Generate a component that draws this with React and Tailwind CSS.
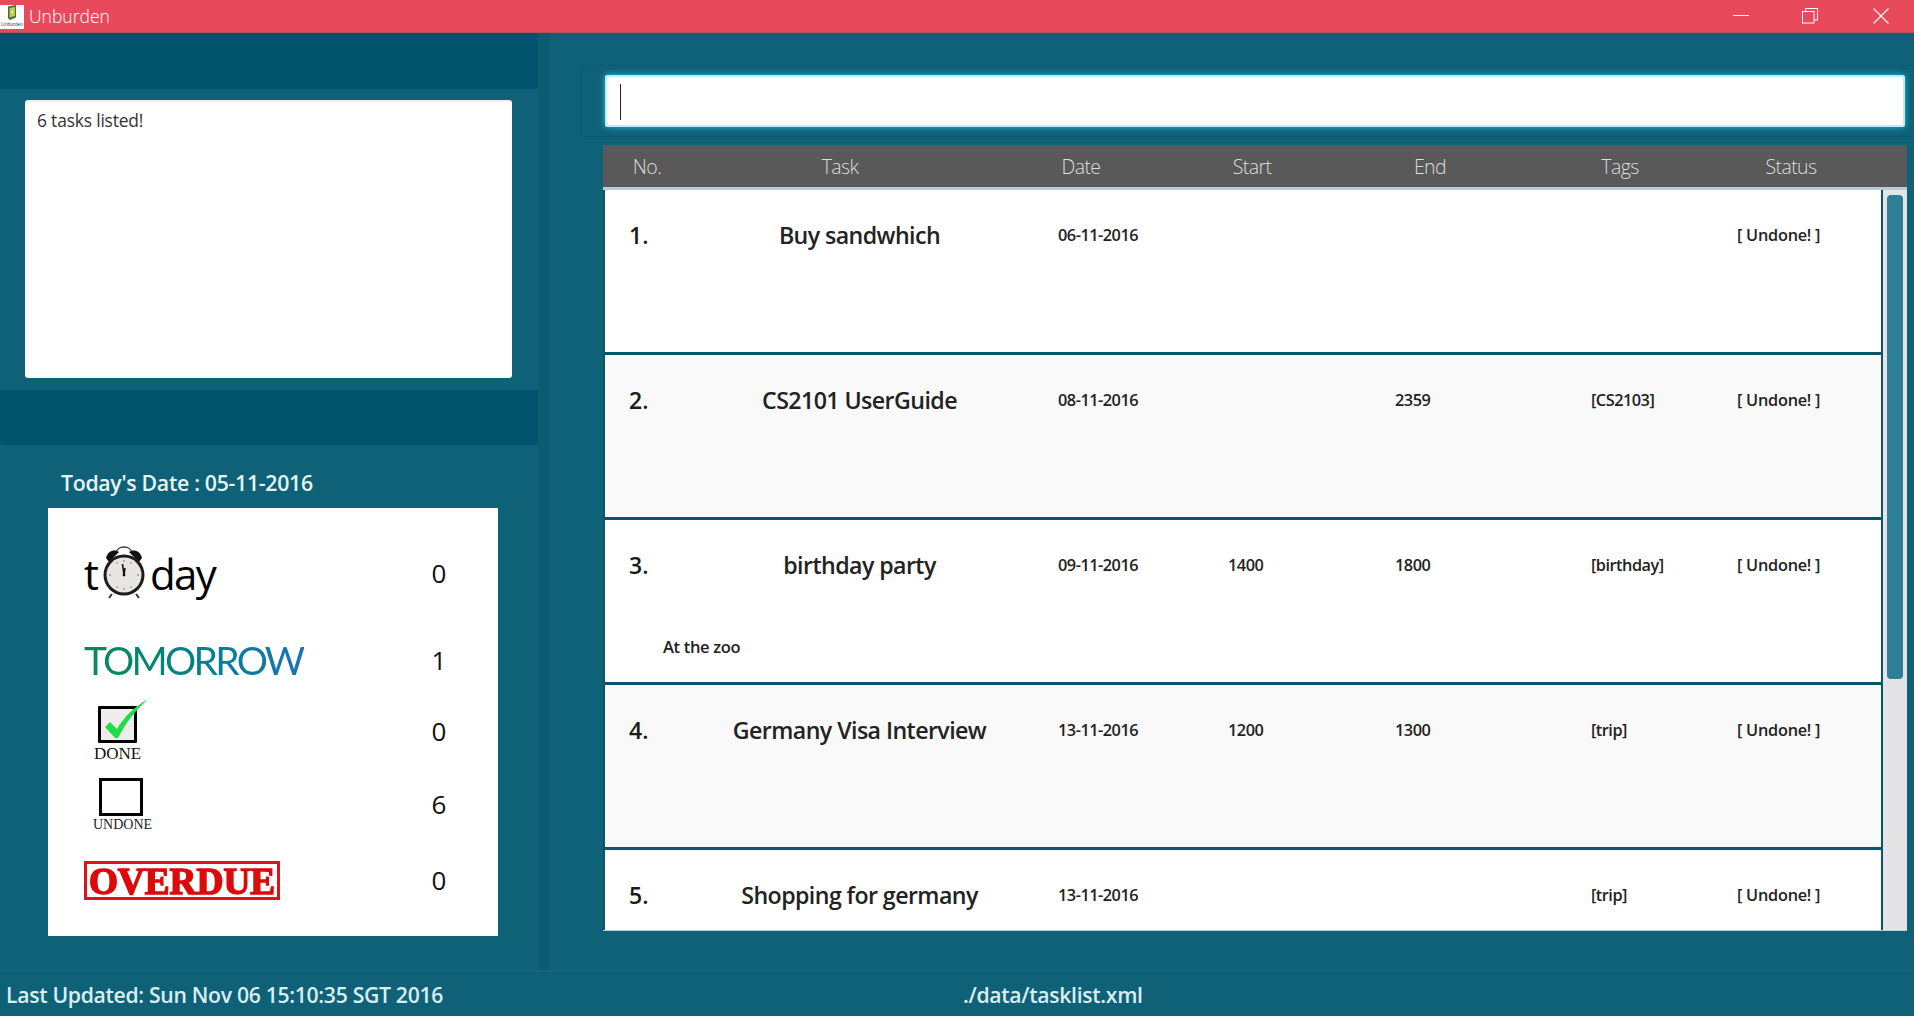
import React from 'react';

const tasks = [
    { no: '1.', name: 'Buy sandwhich', date: '06-11-2016', start: '', end: '', tags: '', desc: '' },
    { no: '2.', name: 'CS2101 UserGuide', date: '08-11-2016', start: '', end: '2359', tags: '[CS2103]', desc: '' },
    { no: '3.', name: 'birthday party', date: '09-11-2016', start: '1400', end: '1800', tags: '[birthday]', desc: 'At the zoo' },
    { no: '4.', name: 'Germany Visa Interview', date: '13-11-2016', start: '1200', end: '1300', tags: '[trip]', desc: '' },
    { no: '5.', name: 'Shopping for germany', date: '13-11-2016', start: '', end: '', tags: '[trip]', desc: '' },
];

const WindowControls = () => (
    <div className="flex items-center h-full text-white">
        <svg width="16" height="16" viewBox="0 0 16 16" className="mr-[53px]" fill="none" stroke="currentColor" strokeWidth="1">
            <path d="M0 7.5H16" />
        </svg>
        <svg width="16" height="16" viewBox="0 0 16 16" className="mr-[55px]" fill="none" stroke="currentColor" strokeWidth="1">
            <rect x="0.5" y="3.5" width="11.5" height="11.5" />
            <path d="M3.5 3.5V0.5H15.5V12H12" />
        </svg>
        <svg width="16" height="16" viewBox="0 0 16 16" className="mr-[25px]" fill="none" stroke="currentColor" strokeWidth="1.1">
            <path d="M0.5 0.5L15.5 15.5M15.5 0.5L0.5 15.5" />
        </svg>
    </div>
);

const TitleBar = () => (
    <div className="h-[33px] shrink-0 bg-[#e84a5c] flex items-center justify-between border-b border-[#b9505f]">
        <div className="flex items-center h-full">
            <div className="w-[24px] h-[24px] mt-[2px] bg-white flex flex-col items-center overflow-hidden">
                <svg width="10" height="16" viewBox="0 0 10 16" className="shrink-0">
                    <path d="M1 1.5L9 0V12.5L3 15L1 13Z" fill="#4d6b3a" />
                    <path d="M2.5 3L8 2V11L2.5 12.5Z" fill="#bcd04a" />
                    <circle cx="5.2" cy="7" r="1.2" fill="#eef3a0" />
                </svg>
                <span className="text-[5px] leading-[7px] text-[#444] font-['Liberation_Sans',sans-serif]">Unburden</span>
            </div>
            <span className="ml-[5px] text-[17.5px] font-light text-white font-['Open_Sans',sans-serif]">Unburden</span>
        </div>
        <WindowControls />
    </div>
);

const AlarmClock = () => (
    <svg width="42" height="56" viewBox="0 0 42 56" className="mx-[1px] shrink-0">
        <path d="M13 9C14 1 28 1 29 9" fill="none" stroke="#333" strokeWidth="1.4" />
        <path d="M3 14C5 6 12 5 16 8L6 18Z" fill="#111" />
        <path d="M39 14C37 6 30 5 26 8L36 18Z" fill="#111" />
        <path d="M9 50L6 54M33 50L36 54" stroke="#333" strokeWidth="2" />
        <circle cx="21" cy="31" r="20.5" fill="#1c1c1c" />
        <circle cx="21" cy="31" r="17.5" fill="#e8e6e0" />
        <path d="M21 31L19.5 20M21 31L22 24" stroke="#111" strokeWidth="1.6" />
        <circle cx="21" cy="31" r="1.4" fill="#111" />
        <path d="M21 16V18M21 44V46M6 31H8M34 31H36M13.5 18L14.5 19.7M28.5 18L27.5 19.7M13.5 44L14.5 42.3M28.5 44L27.5 42.3" stroke="#777" strokeWidth="1" />
    </svg>
);

const TodayLogo = () => (
    <div className="flex items-end h-[54px] leading-none text-black text-[42px] font-['Open_Sans',sans-serif]">
        <span className="mb-[5px] mr-[3px]">t</span>
        <AlarmClock />
        <span className="mb-[5px] ml-[4px] tracking-[-0.04em]">day</span>
    </div>
);

const TomorrowLogo = () => (
    <div className="w-[219px]">
        <div className="w-fit h-[30px] flex items-center text-[39px] leading-none tracking-[-0.07em] pr-[2px] text-transparent bg-clip-text bg-gradient-to-r from-[#0b8a4f] to-[#1a72b8] font-['Lato',sans-serif]">
            TOMORROW
        </div>
    </div>
);

const DoneLogo = () => (
    <div className="h-[62px] relative w-[64px] ml-[10px]">
        <div className="absolute left-[4px] top-[7px] w-[39px] h-[37px] border-[3px] border-black bg-[#ededed] rounded-[1px]" />
        <svg width="48" height="44" viewBox="0 0 48 44" className="absolute left-[6px] top-0">
            <path d="M5 28L10 23L17 30C24 18 34 8 48 0C36 11 26 23 18 39H15Z" fill="#22dd4a" />
        </svg>
        <span className="absolute left-0 top-[47px] text-[17px] leading-[15px] text-[#111] font-['Liberation_Serif',serif]">DONE</span>
    </div>
);

const UndoneLogo = () => (
    <div className="h-[52px] relative w-[64px] ml-[9px]">
        <div className="absolute left-[6px] top-0 w-[44px] h-[38px] border-[3px] border-black bg-white" />
        <span className="absolute left-0 top-[40px] text-[14px] leading-[13px] text-[#222] whitespace-nowrap font-['Liberation_Serif',serif]">UNDONE</span>
    </div>
);

const OverdueLogo = () => (
    <div className="h-[39px] w-[196px] border-[3px] border-[#d8141c] flex items-center justify-center overflow-hidden">
        <span className="text-[38px] leading-none font-bold text-[#dc0a0a] scale-x-[0.98] font-['Liberation_Serif',serif] [-webkit-text-stroke:1.5px_#dc0a0a]">OVERDUE</span>
    </div>
);

const SummaryRow = ({ logo, count, className, countClass = '' }) => (
    <div className={`flex items-center justify-between pl-[36px] pr-[39px] ${className}`}>
        {logo}
        <span className={`w-[40px] text-center text-[26px] text-[#111] leading-none ${countClass}`}>{count}</span>
    </div>
);

const Sidebar = () => (
    <aside className="w-[538px] shrink-0 flex flex-col">
        <div className="h-[56px] shrink-0 bg-[#00556c] rounded-br-[3px]" />
        <div className="h-[301px] shrink-0 pt-[11px] pl-[25px] pr-[26px]">
            <div className="h-[278px] bg-white rounded-[3px] border-t-2 border-[#f0f0f0] px-[12px] py-[5px] text-[17.4px] text-[#333] tracking-[-0.01em]">
                6 tasks listed!
            </div>
        </div>
        <div className="h-[55px] shrink-0 bg-[#00556c] rounded-b-[3px]" />
        <div className="pl-[61px] pt-[22px] h-[63px] text-[21.3px] font-semibold text-[#e6f4f6] tracking-[-0.015em]">
            Today's Date : 05-11-2016
        </div>
        <div className="ml-[48px] w-[450px] h-[428px] bg-white pt-[38px] flex flex-col">
            <SummaryRow logo={<TodayLogo />} count="0" className="h-[54px]" />
            <SummaryRow logo={<TomorrowLogo />} count="1" className="h-[30px] mt-[45px]" />
            <SummaryRow logo={<DoneLogo />} count="0" countClass="pt-[2px]" className="h-[62px] mt-[24px]" />
            <SummaryRow logo={<UndoneLogo />} count="6" className="h-[52px] mt-[17px]" />
            <SummaryRow logo={<OverdueLogo />} count="0" countClass="pb-[1px]" className="h-[39px] mt-[31px]" />
        </div>
    </aside>
);

const TableHeader = () => (
    <div className="ml-[53px] mr-[7px] mt-[8px] h-[42px] pt-[1px] shrink-0 bg-[#595959] grid grid-cols-[88px_298px_184px_158px_198px_182px_160px] items-center text-[19.5px] font-light text-[#dedede] text-center tracking-[-0.03em]">
        <span>No.</span>
        <span>Task</span>
        <span>Date</span>
        <span>Start</span>
        <span>End</span>
        <span>Tags</span>
        <span>Status</span>
    </div>
);

const TaskRow = ({ task, alt }) => (
    <div className={`h-[165px] shrink-0 border-b-[3px] border-[#0b556b] relative ${alt ? 'bg-[#f9f9f9]' : 'bg-white'}`}>
        <div className="grid grid-cols-[124px_261px_238px_167px_196px_146px_146px] items-center pt-[29px] text-[#222] leading-[32px]">
            <span className="pl-[24px] text-[23px] font-semibold text-[#1a1a1a]">{task.no}</span>
            <span className="text-center text-[23.2px] font-semibold tracking-[-0.025em] whitespace-nowrap">{task.name}</span>
            <span className="pl-[68px] text-[16.3px] font-semibold tracking-[-0.03em]">{task.date}</span>
            <span className="text-[16.3px] font-semibold tracking-[-0.03em]">{task.start}</span>
            <span className="text-[16.3px] font-semibold tracking-[-0.03em]">{task.end}</span>
            <span className="text-[16.3px] font-semibold tracking-[-0.03em]">{task.tags}</span>
            <span className="text-[16.3px] font-semibold tracking-[-0.015em] whitespace-nowrap">[ Undone! ]</span>
        </div>
        {task.desc && (
            <div className="pl-[58px] mt-[54px] text-[16.5px] font-semibold tracking-[-0.02em] text-[#222]">{task.desc}</div>
        )}
    </div>
);

const TaskList = () => (
    <div className="ml-[53px] mr-[7px] h-[744px] shrink-0 flex border-t-[3px] border-b border-[#b7cdd3] bg-[#e4e4e6] overflow-hidden">
        <div className="w-[1280px] shrink-0 flex flex-col border-x-2 border-l-[#0b556b] border-r-[#0b556b] overflow-hidden">
            {tasks.map((task, i) => (
                <TaskRow key={task.no} task={task} alt={i % 2 === 1} />
            ))}
        </div>
        <div className="flex-1 pt-[5px] pl-[4px] pr-[4px]">
            <div className="h-[484px] bg-[#2e7f96] rounded-[4px]" />
        </div>
    </div>
);

const MainPanel = () => (
    <main className="flex-1 min-w-0 flex flex-col pt-[32px]">
        <div className="ml-[30px] h-[72px] shrink-0 border border-r-0 border-[#0d5a70] pl-[24px] pr-[9px] pt-[9px]">
            <div className="h-[52px] bg-white rounded-[2px] border-[2px] border-[#b5f0fb] shadow-[0_0_6px_#2bbbdc] pl-[13px] pt-[7px]">
                <div className="w-[1px] h-[36px] bg-[#222]" />
            </div>
        </div>
        <TableHeader />
        <TaskList />
    </main>
);

export default function App() {
    return (
        <div className="w-[1914px] h-[1016px] flex flex-col overflow-hidden bg-[#0f6177] font-['Open_Sans',sans-serif]">
            <TitleBar />
            <div className="flex-1 min-h-0 flex">
                <Sidebar />
                <div className="w-[12px] shrink-0 bg-[#0c5b71]" />
                <MainPanel />
            </div>
            <div className="h-[46px] shrink-0 border-t border-[#1a6a80] flex items-center pt-[2px] text-[21.2px] font-semibold text-[#d9eef2] tracking-[-0.015em]">
                <span className="pl-[6px] w-[963px]">Last Updated: Sun Nov 06 15:10:35 SGT 2016</span>
                <span>./data/tasklist.xml</span>
            </div>
        </div>
    );
}
